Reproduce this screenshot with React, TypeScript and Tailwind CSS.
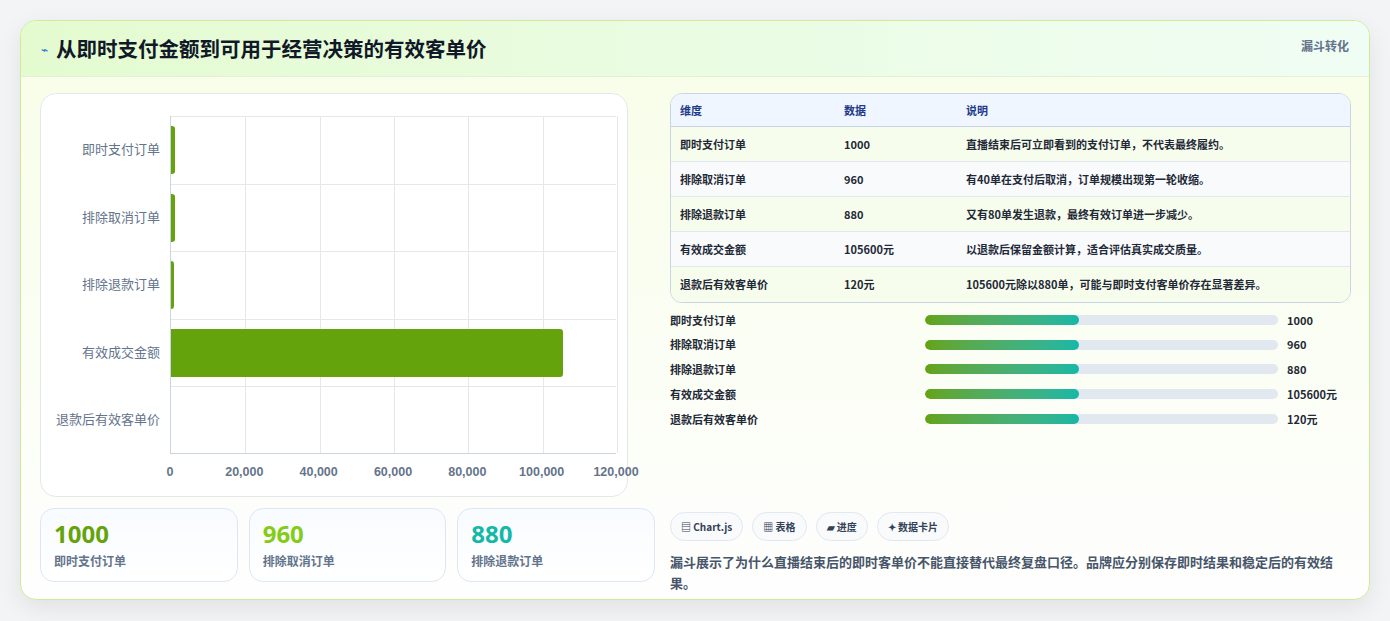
import React from "react";

const rows = [
  ["即时支付订单", "1000", "直播结束后可立即看到的支付订单，不代表最终履约。"],
  ["排除取消订单", "960", "有40单在支付后取消，订单规模出现第一轮收缩。"],
  ["排除退款订单", "880", "又有80单发生退款，最终有效订单进一步减少。"],
  ["有效成交金额", "105600元", "以退款后保留金额计算，适合评估真实成交质量。"],
  ["退款后有效客单价", "120元", "105600元除以880单，可能与即时支付客单价存在显著差异。"],
];
const vals = [1000, 960, 880, 105600, 120];

export default function App() {
  const font = { fontFamily: '"Noto Sans CJK SC", "Noto Sans", sans-serif' };
  return (
    <div className="w-[1390px] h-[621px] bg-[#f3f4f6] pt-[20px] px-[20px]" style={font}>
      <div className="w-[1350px] h-[580px] rounded-[16px] border border-[#cdeb9a] bg-gradient-to-b from-[#f7fee7] to-[#fefefe] shadow-[0_8px_24px_rgba(0,0,0,0.08)] overflow-hidden">
        <div className="h-[56px] flex items-center justify-between px-[20px] bg-gradient-to-r from-[#e4fbd0] to-[#f0fdf4] border-b border-[#e2f0d6]">
          <div className="flex items-center gap-[8px]">
            <span className="text-[#2563eb] text-[12px]">⌁</span>
            <span className="text-[20.5px] font-bold text-[#111827]">从即时支付金额到可用于经营决策的有效客单价</span>
          </div>
          <span className="text-[12px] font-bold text-[#64748b] self-start mt-[16px]">漏斗转化</span>
        </div>
        <div className="flex gap-[15px] px-[19px] pt-[16px]">
          <div className="w-[615px] flex flex-col gap-[11px]">
            <div className="w-[588px] h-[404px] bg-white rounded-[16px] border border-[#e5e7eb] relative">
              <div className="absolute left-[129px] top-[22px] w-[446px] h-[338px] border-l border-b border-[#cbd5e1]">
                {[1, 2, 3, 4, 5, 6].map((i) => (
                  <div key={i} className="absolute top-0 bottom-0 w-px bg-[#e5e7eb]" style={{ left: (i * 446) / 6 }} />
                ))}
                {[0, 1, 2, 3, 4].map((i) => (
                  <div key={i} className="absolute left-0 right-0 h-px bg-[#e5e7eb]" style={{ top: i * 67.6 }} />
                ))}
                {vals.map((v, i) => (
                  <div key={i} className="absolute left-0 h-[48px] bg-[#65a30d] rounded-r-[3px]" style={{ top: i * 67.6 + 10, width: v === 120 ? 0 : Math.max(3, (v / 120000) * 446) }} />
                ))}
              </div>
              {rows.map((r, i) => (
                <div key={i} className="absolute left-0 w-[119px] text-right text-[13px] text-[#64748b]" style={{ top: 22 + i * 67.6 + 23 }}>{r[0]}</div>
              ))}
              {["0", "20,000", "40,000", "60,000", "80,000", "100,000", "120,000"].map((t, i) => (
                <div key={t} className="absolute top-[369px] text-[12.5px] font-bold text-[#64748b] -translate-x-1/2" style={{ left: 129 + (i * 446) / 6, fontFamily: '"Liberation Sans", sans-serif' }}>{t}</div>
              ))}
            </div>
            <div className="flex gap-[11px]">
              {[["1000", "text-[#65a30d]", "即时支付订单"], ["960", "text-[#84cc16]", "排除取消订单"], ["880", "text-[#14b8a6]", "排除退款订单"]].map(([n, c, l]) => (
                <div key={n} className="w-[198px] h-[74px] rounded-[14px] border border-[#dbe7f5] bg-gradient-to-b from-[#f8fbff] to-white px-[13px] pt-[9px]">
                  <div className={`text-[24px] font-bold leading-[32px] ${c}`} style={{ fontFamily: '"Open Sans", sans-serif' }}>{n}</div>
                  <div className="text-[12px] font-bold text-[#64748b] mt-[2px]">{l}</div>
                </div>
              ))}
            </div>
          </div>
          <div className="flex-1 flex flex-col">
            <div className="w-[681px] rounded-[12px] border border-[#cbd5e1] overflow-hidden">
              <div className="h-[33px] bg-[#eff6ff] flex items-center text-[11px] font-bold text-[#1e3a8a] border-b border-[#cbd5e1]">
                <div className="w-[173px] pl-[9px]">维度</div>
                <div className="w-[122px]">数据</div>
                <div>说明</div>
              </div>
              {rows.map((r, i) => (
                <div key={i} className={`h-[35px] flex items-center text-[11px] font-bold text-[#1f2937] ${i < 4 ? "border-b border-[#e2e8f0]" : ""} ${i % 2 === 0 ? "bg-[#f7fdec]" : "bg-[#f8fafc]"}`}>
                  <div className="w-[173px] pl-[9px]">{r[0]}</div>
                  <div className="w-[122px]">{r[1]}</div>
                  <div>{r[2]}</div>
                </div>
              ))}
            </div>
            <div className="flex flex-col gap-[8.7px] mt-[9px]">
              {rows.map((r) => (
                <div key={r[0]} className="flex items-center h-[16px] text-[11px] font-bold text-[#1f2937]">
                  <div className="w-[255px]">{r[0]}</div>
                  <div className="w-[353px] h-[10px] rounded-full bg-[#e2e8f0] overflow-hidden">
                    <div className="h-full w-[154px] rounded-full bg-gradient-to-r from-[#65a30d] to-[#14b8a6]" />
                  </div>
                  <div className="ml-[9px]">{r[1]}</div>
                </div>
              ))}
            </div>
            <div className="flex gap-[9px] mt-[85px]">
              {["▤ Chart.js", "▦ 表格", "▰ 进度", "✦ 数据卡片"].map((t) => (
                <div key={t} className="h-[29px] px-[10px] flex items-center rounded-full border border-[#e2e8f0] bg-[#f8fafc] text-[10px] font-bold text-[#334155]">{t}</div>
              ))}
            </div>
            <p className="mt-[10px] text-[13px] font-bold leading-[21px] text-[#475569] w-[665px]">漏斗展示了为什么直播结束后的即时客单价不能直接替代最终复盘口径。品牌应分别保存即时结果和稳定后的有效结果。</p>
          </div>
        </div>
      </div>
    </div>
  );
}
